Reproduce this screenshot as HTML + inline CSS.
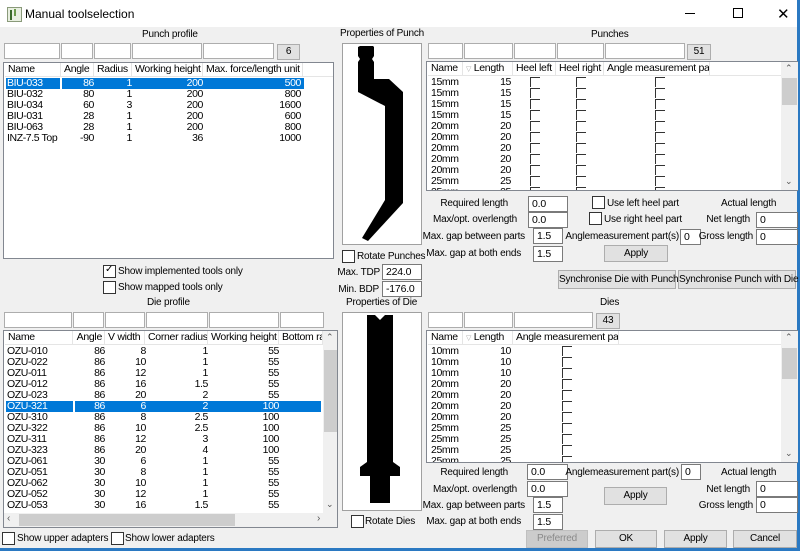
<!DOCTYPE html>
<html><head><meta charset="utf-8"><style>
*{box-sizing:border-box;margin:0;padding:0}
body{width:800px;height:551px;overflow:hidden;background:#f0f0f0;font-family:"Liberation Sans",sans-serif;font-size:10px;letter-spacing:-0.2px;color:#000;position:relative;white-space:nowrap}
.a{position:absolute}
.in{position:absolute;background:#fff;border:1px solid #7a7a7a;height:16px;line-height:14px;padding-left:3px;font-size:10.5px}
.fb{position:absolute;background:#fff;border:1px solid #adadad;height:16px}
.btn{position:absolute;background:#e1e1e1;border:1px solid #adadad;text-align:center}
.lst{position:absolute;background:#fff;border:1px solid #828790;overflow:hidden}
.hd{position:absolute;top:0;height:14px;border-right:1px solid #e5e5e5;border-bottom:1px solid #e5e5e5;line-height:13px;padding-left:3px;overflow:hidden;letter-spacing:-0.3px;font-size:10.5px}
.r{position:absolute;height:11px;line-height:11px;letter-spacing:-0.4px;font-size:10.5px}
.r span{position:absolute;text-align:right}
.cb{position:absolute;width:13px;height:13px;border:1px solid #333;background:#fff}
.lb{position:absolute}
.rl{position:absolute;text-align:right}
.sel{background:#0078d7;color:#fff}
</style></head><body>
<div class="a" style="left:0;top:0;width:800px;height:27px;background:#fff"></div>
<div class="a" style="left:7px;top:7px;width:15px;height:15px;border:1px solid #8a9a7a;background:#e8efe0"></div>
<div class="a" style="left:10px;top:10px;width:2px;height:10px;background:#3a6a2a"></div>
<div class="a" style="left:14px;top:9px;width:2px;height:7px;background:#6a9a4a"></div>
<div class="lb" style="left:25px;top:7px;font-size:12px;letter-spacing:0">Manual toolselection</div>
<div class="a" style="left:685px;top:13px;width:10px;height:1px;background:#000"></div>
<div class="a" style="left:733px;top:8px;width:10px;height:10px;border:1px solid #000"></div>
<div class="lb" style="left:777px;top:5px;font-size:15px">✕</div>
<div class="a" style="left:797px;top:0;width:3px;height:551px;background:#2b79c2"></div>
<div class="a" style="left:0;top:548px;width:800px;height:3px;background:#2b79c2"></div>

<div class="lb" style="left:142px;top:29px">Punch profile</div>
<div class="fb" style="left:4px;top:43px;width:56px"></div>
<div class="fb" style="left:61px;top:43px;width:32px"></div>
<div class="fb" style="left:94px;top:43px;width:37px"></div>
<div class="fb" style="left:132px;top:43px;width:70px"></div>
<div class="fb" style="left:203px;top:43px;width:71px"></div>
<div class="btn" style="left:277px;top:44px;width:23px;height:16px;line-height:14px">6</div>
<div class="lst" style="left:3px;top:62px;width:331px;height:197px">
 <div class="hd" style="left:1px;width:56px">Name</div>
 <div class="hd" style="left:57px;width:33px">Angle</div>
 <div class="hd" style="left:90px;width:38px">Radius</div>
 <div class="hd" style="left:128px;width:71px">Working height</div>
 <div class="hd" style="left:199px;width:100px">Max. force/length unit</div>
 <div class="hd" style="left:299px;width:31px;border-right:none"></div>
 <div class="r sel" style="left:2px;top:15px;width:298px"><span style="left:1px;text-align:left">BIU-033</span><span style="right:210px">86</span><span style="right:172px">1</span><span style="right:101px">200</span><span style="right:3px">500</span></div>
 <div class="a" style="left:56px;top:15px;width:2px;height:11px;background:#fff"></div>
 <div class="r" style="left:2px;top:26px;width:298px"><span style="left:1px;text-align:left">BIU-032</span><span style="right:210px">80</span><span style="right:172px">1</span><span style="right:101px">200</span><span style="right:3px">800</span></div>
 <div class="r" style="left:2px;top:37px;width:298px"><span style="left:1px;text-align:left">BIU-034</span><span style="right:210px">60</span><span style="right:172px">3</span><span style="right:101px">200</span><span style="right:3px">1600</span></div>
 <div class="r" style="left:2px;top:48px;width:298px"><span style="left:1px;text-align:left">BIU-031</span><span style="right:210px">28</span><span style="right:172px">1</span><span style="right:101px">200</span><span style="right:3px">600</span></div>
 <div class="r" style="left:2px;top:59px;width:298px"><span style="left:1px;text-align:left">BIU-063</span><span style="right:210px">28</span><span style="right:172px">1</span><span style="right:101px">200</span><span style="right:3px">800</span></div>
 <div class="r" style="left:2px;top:70px;width:298px"><span style="left:1px;text-align:left">INZ-7.5 Top</span><span style="right:210px">-90</span><span style="right:172px">1</span><span style="right:101px">36</span><span style="right:3px">1000</span></div>
</div>
<div class="cb" style="left:103px;top:265px"></div>
<div class="lb" style="left:105px;top:264px;font-size:10px">✓</div>
<div class="lb" style="left:118px;top:266px">Show implemented tools only</div>
<div class="cb" style="left:103px;top:281px"></div>
<div class="lb" style="left:118px;top:282px">Show mapped tools only</div>

<div class="lb" style="left:147px;top:297px">Die profile</div>
<div class="fb" style="left:4px;top:312px;width:68px"></div>
<div class="fb" style="left:73px;top:312px;width:31px"></div>
<div class="fb" style="left:105px;top:312px;width:40px"></div>
<div class="fb" style="left:146px;top:312px;width:62px"></div>
<div class="fb" style="left:209px;top:312px;width:70px"></div>
<div class="fb" style="left:280px;top:312px;width:44px"></div>
<div class="lst" style="left:3px;top:330px;width:335px;height:198px">
 <div class="hd" style="left:1px;width:68px">Name</div>
 <div class="hd" style="left:69px;width:32px;text-align:right;padding-right:2px">Angle</div>
 <div class="hd" style="left:101px;width:40px">V width</div>
 <div class="hd" style="left:141px;width:63px">Corner radius</div>
 <div class="hd" style="left:204px;width:71px">Working height</div>
 <div class="hd" style="left:275px;width:44px">Bottom ra</div>
 <div class="a" style="left:319px;top:0;width:15px;height:182px;background:#f0f0f0"></div>
 <div class="lb" style="left:322px;top:1px;font-size:9px;color:#555">&#8963;</div>
 <div class="a" style="left:320px;top:19px;width:13px;height:82px;background:#cdcdcd"></div>
 <div class="lb" style="left:322px;top:168px;font-size:9px;color:#555">&#8964;</div>
 <div class="a" style="left:0;top:182px;width:335px;height:15px;background:#f0f0f0"></div>
 <div class="a" style="left:15px;top:183px;width:216px;height:12px;background:#cdcdcd"></div>
 <div class="lb" style="left:3px;top:182px;color:#555">&lsaquo;</div>
 <div class="lb" style="left:313px;top:182px;color:#555">&rsaquo;</div>
 <div style="position:absolute;left:0;top:15px;width:319px;height:167px;overflow:hidden">
 <div class="r" style="left:2px;top:0;width:315px"><span style="left:1px;text-align:left">OZU-010</span><span style="right:216px">86</span><span style="right:175px">8</span><span style="right:113px">1</span><span style="right:42px">55</span></div>
 <div class="r" style="left:2px;top:11px;width:315px"><span style="left:1px;text-align:left">OZU-022</span><span style="right:216px">86</span><span style="right:175px">10</span><span style="right:113px">1</span><span style="right:42px">55</span></div>
 <div class="r" style="left:2px;top:22px;width:315px"><span style="left:1px;text-align:left">OZU-011</span><span style="right:216px">86</span><span style="right:175px">12</span><span style="right:113px">1</span><span style="right:42px">55</span></div>
 <div class="r" style="left:2px;top:33px;width:315px"><span style="left:1px;text-align:left">OZU-012</span><span style="right:216px">86</span><span style="right:175px">16</span><span style="right:113px">1.5</span><span style="right:42px">55</span></div>
 <div class="r" style="left:2px;top:44px;width:315px"><span style="left:1px;text-align:left">OZU-023</span><span style="right:216px">86</span><span style="right:175px">20</span><span style="right:113px">2</span><span style="right:42px">55</span></div>
 <div class="r sel" style="left:2px;top:55px;width:315px"><span style="left:1px;text-align:left">OZU-321</span><span style="right:216px">86</span><span style="right:175px">6</span><span style="right:113px">2</span><span style="right:42px">100</span></div>
 <div class="a" style="left:69px;top:55px;width:2px;height:11px;background:#fff"></div>
 <div class="r" style="left:2px;top:66px;width:315px"><span style="left:1px;text-align:left">OZU-310</span><span style="right:216px">86</span><span style="right:175px">8</span><span style="right:113px">2.5</span><span style="right:42px">100</span></div>
 <div class="r" style="left:2px;top:77px;width:315px"><span style="left:1px;text-align:left">OZU-322</span><span style="right:216px">86</span><span style="right:175px">10</span><span style="right:113px">2.5</span><span style="right:42px">100</span></div>
 <div class="r" style="left:2px;top:88px;width:315px"><span style="left:1px;text-align:left">OZU-311</span><span style="right:216px">86</span><span style="right:175px">12</span><span style="right:113px">3</span><span style="right:42px">100</span></div>
 <div class="r" style="left:2px;top:99px;width:315px"><span style="left:1px;text-align:left">OZU-323</span><span style="right:216px">86</span><span style="right:175px">20</span><span style="right:113px">4</span><span style="right:42px">100</span></div>
 <div class="r" style="left:2px;top:110px;width:315px"><span style="left:1px;text-align:left">OZU-061</span><span style="right:216px">30</span><span style="right:175px">6</span><span style="right:113px">1</span><span style="right:42px">55</span></div>
 <div class="r" style="left:2px;top:121px;width:315px"><span style="left:1px;text-align:left">OZU-051</span><span style="right:216px">30</span><span style="right:175px">8</span><span style="right:113px">1</span><span style="right:42px">55</span></div>
 <div class="r" style="left:2px;top:132px;width:315px"><span style="left:1px;text-align:left">OZU-062</span><span style="right:216px">30</span><span style="right:175px">10</span><span style="right:113px">1</span><span style="right:42px">55</span></div>
 <div class="r" style="left:2px;top:143px;width:315px"><span style="left:1px;text-align:left">OZU-052</span><span style="right:216px">30</span><span style="right:175px">12</span><span style="right:113px">1</span><span style="right:42px">55</span></div>
 <div class="r" style="left:2px;top:154px;width:315px"><span style="left:1px;text-align:left">OZU-053</span><span style="right:216px">30</span><span style="right:175px">16</span><span style="right:113px">1.5</span><span style="right:42px">55</span></div>
 </div>
</div>
<div class="cb" style="left:2px;top:532px"></div>
<div class="lb" style="left:17px;top:533px">Show upper adapters</div>
<div class="cb" style="left:111px;top:532px"></div>
<div class="lb" style="left:125px;top:533px">Show lower adapters</div>

<div class="lb" style="left:340px;top:28px">Properties of Punch</div>
<div class="a" style="left:342px;top:43px;width:80px;height:202px;background:#fff;border:1px solid #a0a0a0"></div>
<div class="a" style="left:342px;top:312px;width:80px;height:199px;background:#fff;border:1px solid #a0a0a0"></div>
<svg class="a" style="left:0;top:0" width="800" height="551"><path d="M360,46 L373,46 L374,47 L374,56 L372,59 L374,62 L374,79 L389,79 L403,92 L403,203 L368,241 L362,238 L385,200 L385,106 L358,92 L358,62 L360,59 L358,56 L358,47 Z" fill="#000"/>
<path d="M367,315 L375,315 L380,320 L385,315 L393,315 L393,462 L400,467 L400,476 L390,476 L390,503 L370,503 L370,476 L360,476 L360,467 L367,462 Z" fill="#000"/></svg>
<div class="cb" style="left:342px;top:250px"></div>
<div class="lb" style="left:357px;top:251px">Rotate Punches</div>
<div class="rl" style="right:420px;top:267px">Max. TDP</div>
<div class="in" style="left:382px;top:264px;width:40px">224.0</div>
<div class="rl" style="right:421px;top:284px">Min. BDP</div>
<div class="in" style="left:382px;top:281px;width:40px">-176.0</div>
<div class="lb" style="left:346px;top:297px">Properties of Die</div>
<div class="cb" style="left:351px;top:515px"></div>
<div class="lb" style="left:365px;top:516px">Rotate Dies</div>

<div class="lb" style="left:591px;top:29px">Punches</div>
<div class="fb" style="left:428px;top:43px;width:35px"></div>
<div class="fb" style="left:464px;top:43px;width:49px"></div>
<div class="fb" style="left:514px;top:43px;width:42px"></div>
<div class="fb" style="left:557px;top:43px;width:47px"></div>
<div class="fb" style="left:605px;top:43px;width:80px"></div>
<div class="btn" style="left:687px;top:44px;width:24px;height:16px;line-height:14px">51</div>
<div class="lst" style="left:426px;top:61px;width:372px;height:130px;border-right:none">
 <div class="hd" style="left:1px;width:35px">Name</div>
 <div class="hd" style="left:36px;width:50px"><span style="color:#aaa;font-size:7px">▽</span>&nbsp;Length</div>
 <div class="hd" style="left:86px;width:43px">Heel left</div>
 <div class="hd" style="left:129px;width:48px">Heel right</div>
 <div class="hd" style="left:177px;width:106px">Angle measurement part</div>
 <div class="hd" style="left:283px;width:71px;border-right:none"></div>
 <div class="a" style="left:354px;top:0;width:17px;height:130px;background:#f0f0f0"></div>
 <div class="lb" style="left:358px;top:1px;font-size:9px;color:#555">&#8963;</div>
 <div class="a" style="left:355px;top:16px;width:15px;height:27px;background:#cdcdcd"></div>
 <div class="lb" style="left:358px;top:114px;font-size:9px;color:#555">&#8964;</div>
 <div style="position:absolute;left:0;top:15px;width:354px;height:114px;overflow:hidden">
  <div class="r" style="left:4px;top:0;width:80px"><span style="left:0;text-align:left">15mm</span><span style="right:0">15</span></div>
  <div class="r" style="left:4px;top:11px;width:80px"><span style="left:0;text-align:left">15mm</span><span style="right:0">15</span></div>
  <div class="r" style="left:4px;top:22px;width:80px"><span style="left:0;text-align:left">15mm</span><span style="right:0">15</span></div>
  <div class="r" style="left:4px;top:33px;width:80px"><span style="left:0;text-align:left">15mm</span><span style="right:0">15</span></div>
  <div class="r" style="left:4px;top:44px;width:80px"><span style="left:0;text-align:left">20mm</span><span style="right:0">20</span></div>
  <div class="r" style="left:4px;top:55px;width:80px"><span style="left:0;text-align:left">20mm</span><span style="right:0">20</span></div>
  <div class="r" style="left:4px;top:66px;width:80px"><span style="left:0;text-align:left">20mm</span><span style="right:0">20</span></div>
  <div class="r" style="left:4px;top:77px;width:80px"><span style="left:0;text-align:left">20mm</span><span style="right:0">20</span></div>
  <div class="r" style="left:4px;top:88px;width:80px"><span style="left:0;text-align:left">20mm</span><span style="right:0">20</span></div>
  <div class="r" style="left:4px;top:99px;width:80px"><span style="left:0;text-align:left">25mm</span><span style="right:0">25</span></div>
  <div class="r" style="left:4px;top:110px;width:80px"><span style="left:0;text-align:left">25mm</span><span style="right:0">25</span></div>
 </div>
</div>
<div class="a" style="left:426px;top:77px;width:354px;height:113px;overflow:hidden">
 <div class="a" style="left:104px;top:0;width:10px;height:121px;background:repeating-linear-gradient(#333 0,#333 1px,transparent 1px,transparent 11px)"></div>
 <div class="a" style="left:104px;top:0;width:1px;height:121px;background:repeating-linear-gradient(#333 0,#333 10px,transparent 10px,transparent 11px)"></div>
 <div class="a" style="left:150px;top:0;width:10px;height:121px;background:repeating-linear-gradient(#333 0,#333 1px,transparent 1px,transparent 11px)"></div>
 <div class="a" style="left:150px;top:0;width:1px;height:121px;background:repeating-linear-gradient(#333 0,#333 10px,transparent 10px,transparent 11px)"></div>
 <div class="a" style="left:229px;top:0;width:10px;height:121px;background:repeating-linear-gradient(#333 0,#333 1px,transparent 1px,transparent 11px)"></div>
 <div class="a" style="left:229px;top:0;width:1px;height:121px;background:repeating-linear-gradient(#333 0,#333 10px,transparent 10px,transparent 11px)"></div>
</div>

<div class="rl" style="right:292px;top:198px">Required length</div>
<div class="in" style="left:528px;top:196px;width:40px">0.0</div>
<div class="rl" style="right:283px;top:214px">Max/opt. overlength</div>
<div class="in" style="left:528px;top:212px;width:40px">0.0</div>
<div class="rl" style="right:275px;top:231px">Max. gap between parts</div>
<div class="in" style="left:533px;top:228px;width:30px">1.5</div>
<div class="rl" style="right:279px;top:248px">Max. gap at both ends</div>
<div class="in" style="left:533px;top:246px;width:30px">1.5</div>
<div class="cb" style="left:592px;top:196px"></div>
<div class="lb" style="left:607px;top:198px">Use left heel part</div>
<div class="cb" style="left:589px;top:212px"></div>
<div class="lb" style="left:604px;top:214px">Use right heel part</div>
<div class="rl" style="right:121px;top:231px">Anglemeasurement part(s)</div>
<div class="in" style="left:680px;top:229px;width:21px">0</div>
<div class="btn" style="left:604px;top:245px;width:64px;height:17px;line-height:15px">Apply</div>
<div class="lb" style="left:721px;top:198px">Actual length</div>
<div class="rl" style="right:50px;top:214px">Net length</div>
<div class="in" style="left:756px;top:212px;width:42px">0</div>
<div class="rl" style="right:47px;top:231px">Gross length</div>
<div class="in" style="left:756px;top:229px;width:42px">0</div>
<div class="btn" style="left:558px;top:270px;width:118px;height:19px;line-height:17px">Synchronise Die with Punch</div>
<div class="btn" style="left:678px;top:270px;width:118px;height:19px;line-height:17px">Synchronise Punch with Die</div>

<div class="lb" style="left:600px;top:297px">Dies</div>
<div class="fb" style="left:428px;top:312px;width:35px"></div>
<div class="fb" style="left:464px;top:312px;width:49px"></div>
<div class="fb" style="left:514px;top:312px;width:79px"></div>
<div class="btn" style="left:596px;top:313px;width:24px;height:16px;line-height:14px">43</div>
<div class="lst" style="left:426px;top:330px;width:372px;height:133px;border-right:none">
 <div class="hd" style="left:1px;width:35px">Name</div>
 <div class="hd" style="left:36px;width:50px"><span style="color:#aaa;font-size:7px">▽</span>&nbsp;Length</div>
 <div class="hd" style="left:86px;width:106px">Angle measurement part</div>
 <div class="hd" style="left:192px;width:162px;border-right:none"></div>
 <div class="a" style="left:354px;top:0;width:17px;height:133px;background:#f0f0f0"></div>
 <div class="lb" style="left:358px;top:1px;font-size:9px;color:#555">&#8963;</div>
 <div class="a" style="left:355px;top:17px;width:15px;height:31px;background:#cdcdcd"></div>
 <div class="lb" style="left:358px;top:117px;font-size:9px;color:#555">&#8964;</div>
 <div style="position:absolute;left:0;top:15px;width:354px;height:117px;overflow:hidden">
  <div class="r" style="left:4px;top:0;width:80px"><span style="left:0;text-align:left">10mm</span><span style="right:0">10</span></div>
  <div class="r" style="left:4px;top:11px;width:80px"><span style="left:0;text-align:left">10mm</span><span style="right:0">10</span></div>
  <div class="r" style="left:4px;top:22px;width:80px"><span style="left:0;text-align:left">10mm</span><span style="right:0">10</span></div>
  <div class="r" style="left:4px;top:33px;width:80px"><span style="left:0;text-align:left">20mm</span><span style="right:0">20</span></div>
  <div class="r" style="left:4px;top:44px;width:80px"><span style="left:0;text-align:left">20mm</span><span style="right:0">20</span></div>
  <div class="r" style="left:4px;top:55px;width:80px"><span style="left:0;text-align:left">20mm</span><span style="right:0">20</span></div>
  <div class="r" style="left:4px;top:66px;width:80px"><span style="left:0;text-align:left">20mm</span><span style="right:0">20</span></div>
  <div class="r" style="left:4px;top:77px;width:80px"><span style="left:0;text-align:left">25mm</span><span style="right:0">25</span></div>
  <div class="r" style="left:4px;top:88px;width:80px"><span style="left:0;text-align:left">25mm</span><span style="right:0">25</span></div>
  <div class="r" style="left:4px;top:99px;width:80px"><span style="left:0;text-align:left">25mm</span><span style="right:0">25</span></div>
  <div class="r" style="left:4px;top:110px;width:80px"><span style="left:0;text-align:left">25mm</span><span style="right:0">25</span></div>
  <div class="a" style="left:135px;top:0;width:10px;height:121px;background:repeating-linear-gradient(#333 0,#333 1px,transparent 1px,transparent 11px)"></div>
  <div class="a" style="left:135px;top:0;width:1px;height:121px;background:repeating-linear-gradient(#333 0,#333 10px,transparent 10px,transparent 11px)"></div>
 </div>
</div>

<div class="rl" style="right:292px;top:467px">Required length</div>
<div class="in" style="left:527px;top:464px;width:41px">0.0</div>
<div class="rl" style="right:283px;top:484px">Max/opt. overlength</div>
<div class="in" style="left:527px;top:481px;width:41px">0.0</div>
<div class="rl" style="right:275px;top:500px">Max. gap between parts</div>
<div class="in" style="left:533px;top:497px;width:30px">1.5</div>
<div class="rl" style="right:279px;top:516px">Max. gap at both ends</div>
<div class="in" style="left:533px;top:514px;width:30px">1.5</div>
<div class="rl" style="right:121px;top:467px">Anglemeasurement part(s)</div>
<div class="in" style="left:681px;top:464px;width:20px">0</div>
<div class="btn" style="left:604px;top:487px;width:63px;height:18px;line-height:16px">Apply</div>
<div class="lb" style="left:721px;top:467px">Actual length</div>
<div class="rl" style="right:50px;top:484px">Net length</div>
<div class="in" style="left:756px;top:481px;width:42px">0</div>
<div class="rl" style="right:47px;top:500px">Gross length</div>
<div class="in" style="left:756px;top:497px;width:42px">0</div>
<div class="btn" style="left:526px;top:530px;width:62px;height:18px;line-height:16px;color:#8a8a8a;background:#cccccc;border-color:#bfbfbf">Preferred</div>
<div class="btn" style="left:595px;top:530px;width:62px;height:18px;line-height:16px">OK</div>
<div class="btn" style="left:664px;top:530px;width:63px;height:18px;line-height:16px">Apply</div>
<div class="btn" style="left:733px;top:530px;width:64px;height:18px;line-height:16px">Cancel</div>
</body></html>
